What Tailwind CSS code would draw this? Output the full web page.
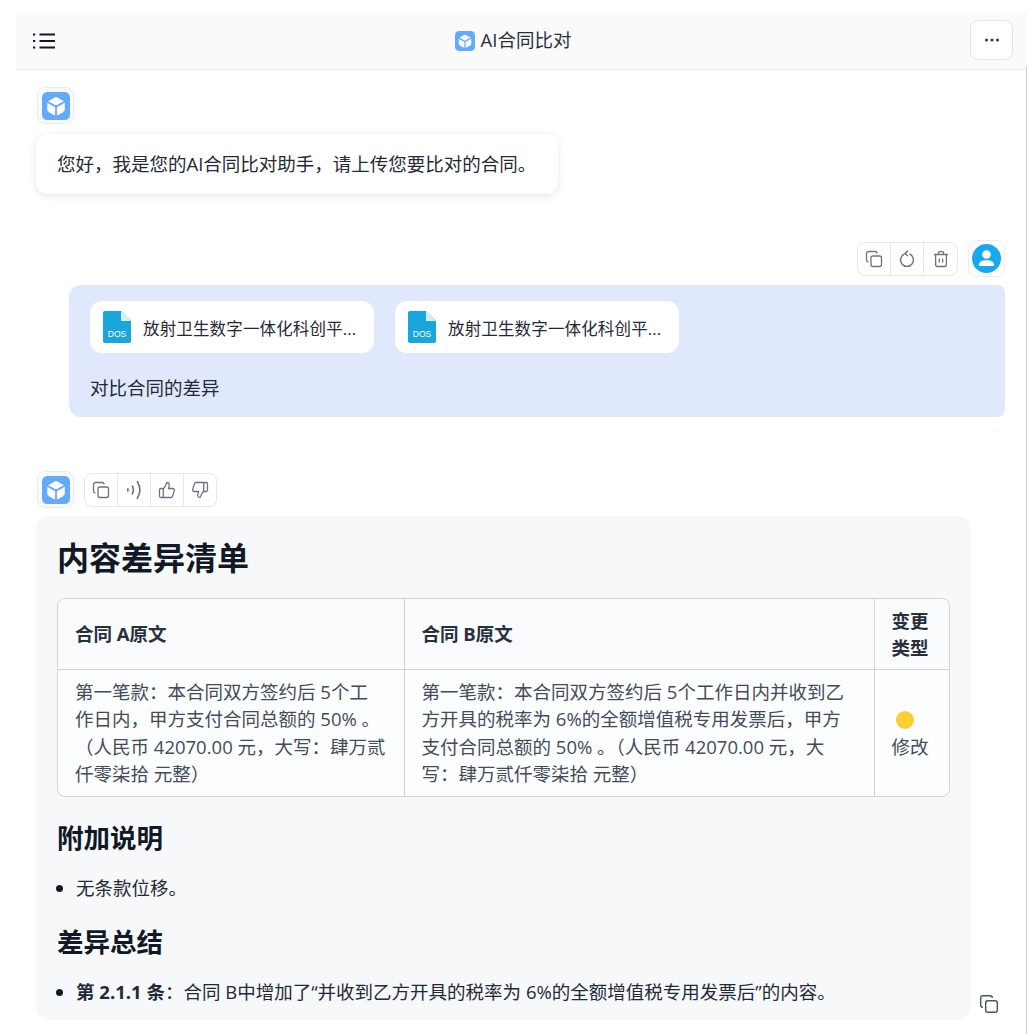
<!DOCTYPE html>
<html lang="zh-CN">
  <head>
    <meta charset="UTF-8" />
    <meta name="viewport" content="width=device-width, initial-scale=1.0" />
    <title>AI合同比对</title>
    <script src="https://cdn.jsdelivr.net/npm/@tailwindcss/browser@4"></script>
  </head>
  <body class="relative h-screen overflow-hidden bg-white text-[18.5px] text-[#1f2937] font-['Open_Sans','Noto_Sans_CJK_SC',sans-serif]">
    <div class="absolute top-[66px] right-[1px] bottom-0 w-px bg-[#cfcfcf]"></div>
    <div class="ml-4 w-[989px] pt-3">
      <!-- header -->
      <header class="flex h-[58px] w-[1010px] items-center justify-between border-b border-[#e8e9eb] bg-[#fafafa] pl-4 pr-[13px]">
        <svg class="h-6 w-6 text-[#111827]" viewBox="0 0 24 24" fill="none" stroke="currentColor" stroke-width="2.2">
          <path d="M7.5 5.5H23M7.5 12H23M7.5 18.5H23" />
          <path d="M1 5.5h2.2M1 12h2.2M1 18.5h2.2" />
        </svg>
        <div class="flex items-center gap-[6px] text-[18.5px] leading-none text-[#27303f]">
          <svg class="h-5 w-5" viewBox="0 0 32 32">
            <rect width="32" height="32" rx="7" fill="#62aafa" />
            <path d="M16 5.5l9 5-9 5-9-5z" fill="#fff" />
            <path d="M6 12.4l9 5v9.600l-7-3.800a4 4 0 0 1-2-3.400z" fill="#fff" />
            <path d="M26 12.4l-9 5v9.600l7-3.800a4 4 0 0 0 2-3.400z" fill="#fff" />
          </svg>
          <span>AI合同比对</span>
        </div>
        <button class="-mt-[2px] flex h-10 w-[43px] items-center justify-center rounded-lg border border-[#e3e4e6] bg-white">
          <svg class="h-5 w-5 text-[#374151]" viewBox="0 0 20 20" fill="currentColor">
            <circle cx="4.5" cy="10" r="1.6" /><circle cx="10" cy="10" r="1.6" /><circle cx="15.5" cy="10" r="1.6" />
          </svg>
        </button>
      </header>

      <!-- greeting -->
      <div class="mt-[17px] ml-[21px] flex h-[37px] w-[37px] items-center justify-center rounded-lg border border-[#e8ebf0] bg-[#f8fafc]">
        <svg class="h-7 w-7" viewBox="0 0 32 32">
          <rect width="32" height="32" rx="6" fill="#62aafa" />
          <path d="M16 5.5l9 5-9 5-9-5z" fill="#fff" />
          <path d="M6 12.4l9 5v9.600l-7-3.800a4 4 0 0 1-2-3.400z" fill="#fff" />
          <path d="M26 12.4l-9 5v9.600l7-3.800a4 4 0 0 0 2-3.400z" fill="#fff" />
        </svg>
      </div>
      <div class="mt-[10px] ml-5 flex h-[60px] w-[522px] items-center rounded-xl bg-white pl-[21px] leading-none shadow-[0_2px_10px_rgba(0,0,0,0.10)]">
        您好，我是您的AI合同比对助手，请上传您要比对的合同。
      </div>

      <!-- user message -->
      <div class="mt-[46px] flex items-center justify-end gap-[10px]">
        <div class="flex h-[34px] items-stretch rounded-lg border border-[#e5e7eb] bg-white text-[#6b7280]">
          <span class="flex w-[33px] items-center justify-center border-r border-[#e5e7eb]">
            <svg class="h-[18px] w-[18px]" viewBox="0 0 18 18" fill="none" stroke="currentColor" stroke-width="1.3"><rect x="6" y="6" width="10.5" height="10.5" rx="2" /><path d="M3.5 12A2 2 0 0 1 1.5 10V3.500a2 2 0 0 1 2-2H10a2 2 0 0 1 2 2" /></svg>
          </span>
          <span class="flex w-[33px] items-center justify-center border-r border-[#e5e7eb]">
            <svg class="h-[18px] w-[18px]" viewBox="0 0 18 18" fill="none" stroke="currentColor" stroke-width="1.4"><path d="M6.200 4.200a6.400 6.400 0 1 0 5.600 0" stroke-linecap="round" /><path d="M10 .9 7 3.500l3 2.500" /></svg>
          </span>
          <span class="flex w-[33px] items-center justify-center">
            <svg class="h-[18px] w-[18px]" viewBox="0 0 18 18" fill="none" stroke="currentColor" stroke-width="1.3"><path d="M2 4.500h14M6.500 4.500V2.600a1 1 0 0 1 1-1h3a1 1 0 0 1 1 1v1.900M3.600 4.500v10a2 2 0 0 0 2 2h6.800a2 2 0 0 0 2-2v-10M7.400 8.500v4M10.600 8.500v4" /></svg>
          </span>
        </div>
        <div class="flex h-[37px] w-[37px] items-center justify-center rounded-lg border border-[#eceef1] bg-white">
          <svg class="h-[29px] w-[29px]" viewBox="0 0 32 32">
            <circle cx="16" cy="16" r="16" fill="#17a9ee" />
            <circle cx="16" cy="11.6" r="4.8" fill="#fff" />
            <path d="M7.600 23.200c0-3.600 3-5.400 8.400-5.400s8.400 1.800 8.400 5.400c0 .8-.5 1.200-1.200 1.200H8.800c-.7 0-1.200-.4-1.200-1.200z" fill="#fff" />
          </svg>
        </div>
      </div>
      <div class="mt-2 ml-[53px] h-[132px] rounded-r-lg rounded-l-xl bg-[#e0e8fd] pt-4 pl-[21px]">
        <div class="flex gap-[21px]">
          <div class="flex h-[52px] w-[284px] items-center gap-[12px] rounded-xl bg-white pl-[13px]">
            <svg class="h-[32px] w-[28px] shrink-0" viewBox="0 0 28 32">
              <path d="M2 0h16l10 10v20a2 2 0 0 1-2 2H2a2 2 0 0 1-2-2V2a2 2 0 0 1 2-2z" fill="#1ba5dd" />
              <path d="M18 0l10 10H18z" fill="#d6eef9" />
              <text x="14" y="26" text-anchor="middle" font-size="8.5" fill="#fff" font-family="Liberation Sans">DOS</text>
            </svg>
            <span class="whitespace-nowrap pt-[5px] text-[16.5px] tracking-[0.15px]">放射卫生数字一体化科创平...</span>
          </div>
          <div class="flex h-[52px] w-[284px] items-center gap-[12px] rounded-xl bg-white pl-[13px]">
            <svg class="h-[32px] w-[28px] shrink-0" viewBox="0 0 28 32">
              <path d="M2 0h16l10 10v20a2 2 0 0 1-2 2H2a2 2 0 0 1-2-2V2a2 2 0 0 1 2-2z" fill="#1ba5dd" />
              <path d="M18 0l10 10H18z" fill="#d6eef9" />
              <text x="14" y="26" text-anchor="middle" font-size="8.5" fill="#fff" font-family="Liberation Sans">DOS</text>
            </svg>
            <span class="whitespace-nowrap pt-[5px] text-[16.5px] tracking-[0.15px]">放射卫生数字一体化科创平...</span>
          </div>
        </div>
        <p class="mt-[24px] leading-[22px]">对比合同的差异</p>
      </div>

      <!-- reply -->
      <div class="mt-[54px] ml-[21px] flex items-center gap-[10px]">
        <div class="flex h-[37px] w-[37px] items-center justify-center rounded-lg border border-[#e8ebf0] bg-[#f8fafc]">
          <svg class="h-7 w-7" viewBox="0 0 32 32">
            <rect width="32" height="32" rx="6" fill="#62aafa" />
            <path d="M16 5.5l9 5-9 5-9-5z" fill="#fff" />
            <path d="M6 12.4l9 5v9.600l-7-3.800a4 4 0 0 1-2-3.400z" fill="#fff" />
            <path d="M26 12.4l-9 5v9.600l7-3.800a4 4 0 0 0 2-3.400z" fill="#fff" />
          </svg>
        </div>
        <div class="flex h-[34px] items-stretch rounded-lg border border-[#e5e7eb] bg-white text-[#6b7280]">
          <span class="flex w-[33px] items-center justify-center border-r border-[#e5e7eb]">
            <svg class="h-[18px] w-[18px]" viewBox="0 0 18 18" fill="none" stroke="currentColor" stroke-width="1.3"><rect x="6" y="6" width="10.5" height="10.5" rx="2" /><path d="M3.500 12A2 2 0 0 1 1.500 10V3.500a2 2 0 0 1 2-2H10a2 2 0 0 1 2 2" /></svg>
          </span>
          <span class="flex w-[33px] items-center justify-center border-r border-[#e5e7eb]">
            <svg class="h-[20px] w-[20px]" viewBox="0 0 18 18" fill="none" stroke="currentColor" stroke-width="1.5" stroke-linecap="round"><path d="M3.500 8v2M7.500 5.500c1.200 2.200 1.200 4.800 0 7M12 1.500c2.800 4.600 2.800 10.400 0 15" /></svg>
          </span>
          <span class="flex w-[33px] items-center justify-center border-r border-[#e5e7eb]">
            <svg class="h-[18px] w-[18px]" viewBox="0 0 24 24" fill="none" stroke="currentColor" stroke-width="1.7"><path d="M7 10v12" /><path d="M15 5.880 14 10h5.830a2 2 0 0 1 1.920 2.560l-2.330 8A2 2 0 0 1 17.500 22H4a2 2 0 0 1-2-2v-8a2 2 0 0 1 2-2h2.760a2 2 0 0 0 1.790-1.110L12 2a3.130 3.130 0 0 1 3 3.880Z" /></svg>
          </span>
          <span class="flex w-[32px] items-center justify-center">
            <svg class="h-[18px] w-[18px]" viewBox="0 0 24 24" fill="none" stroke="currentColor" stroke-width="1.7"><path d="M17 14V2" /><path d="M9 18.120 10 14H4.170a2 2 0 0 1-1.920-2.560l2.330-8A2 2 0 0 1 6.500 2H20a2 2 0 0 1 2 2v8a2 2 0 0 1-2 2h-2.760a2 2 0 0 0-1.790 1.110L12 22a3.130 3.130 0 0 1-3-3.880Z" /></svg>
          </span>
        </div>
      </div>

      <div class="mt-2 ml-5 flex items-end gap-2">
        <article class="h-[504px] w-[935px] shrink-0 rounded-xl bg-[#f6f8fa] px-[21px] pt-[20px]">
          <h1 class="text-[32px] leading-[44px] font-bold text-[#111827]">内容差异清单</h1>
          <div class="mt-[18px] w-[893px] overflow-hidden rounded-lg border border-[#cfd3d8]">
            <table class="w-full table-fixed border-collapse text-left text-[#434b59]">
              <colgroup>
                <col class="w-[346px]" />
                <col class="w-[470px]" />
                <col />
              </colgroup>
              <thead class="bg-[#fafbfc] text-[#27303f]">
                <tr class="h-[70px] border-b border-[#cfd3d8]">
                  <th class="border-r border-[#cfd3d8] pr-[18px] pl-[17px] font-bold">合同 A原文</th>
                  <th class="border-r border-[#cfd3d8] px-[17px] font-bold">合同 B原文</th>
                  <th class="px-[17px] leading-[27px] font-bold">变更类型</th>
                </tr>
              </thead>
              <tbody class="bg-[#fcfdfe]">
                <tr class="h-[127px] leading-[27.500px]">
                  <td class="border-r border-[#cfd3d8] pr-[8px] pl-[17px]">第一笔款：本合同双方签约后 5个工<br />作日内，甲方支付合同总额的 50% 。<br />（人民币 42070.00 元，大写：肆万贰<br />仟零柒拾 元整）</td>
                  <td class="border-r border-[#cfd3d8] px-[17px]">第一笔款：本合同双方签约后 5个工作日内并收到乙方开具的税率为 6%的全额增值税专用发票后，甲方支付合同总额的 50% 。（人民币 42070.00 元，大写：肆万贰仟零柒拾 元整）</td>
                  <td class="px-[17px] pt-[6px]">
                    <span class="ml-[4px] block h-[18px] w-[18px] rounded-full bg-[#fbcf33]"></span>
                    <span class="mt-[4px] block">修改</span>
                  </td>
                </tr>
              </tbody>
            </table>
          </div>
          <h2 class="mt-[23px] text-[26.5px] leading-[36px] font-bold text-[#111827]">附加说明</h2>
          <ul class="mt-[18px] list-disc pl-[19px] leading-[28px] marker:text-[#111827]">
            <li>无条款位移。</li>
          </ul>
          <h2 class="mt-[22px] text-[26.5px] leading-[36px] font-bold text-[#111827]">差异总结</h2>
          <ul class="mt-[18px] list-disc pl-[19px] leading-[28px] marker:text-[#111827]">
            <li><strong class="font-bold">第 2.1.1 条</strong>：合同 B中增加了“并收到乙方开具的税率为 6%的全额增值税专用发票后”的内容。</li>
          </ul>
        </article>
        <svg class="mb-[6px] h-5 w-5 shrink-0 text-[#4b5563]" viewBox="0 0 18 18" fill="none" stroke="currentColor" stroke-width="1.3"><rect x="6" y="6" width="10.500" height="10.500" rx="2" /><path d="M3.500 12A2 2 0 0 1 1.500 10V3.500a2 2 0 0 1 2-2H10a2 2 0 0 1 2 2" /></svg>
      </div>
    </div>
  </body>
</html>
